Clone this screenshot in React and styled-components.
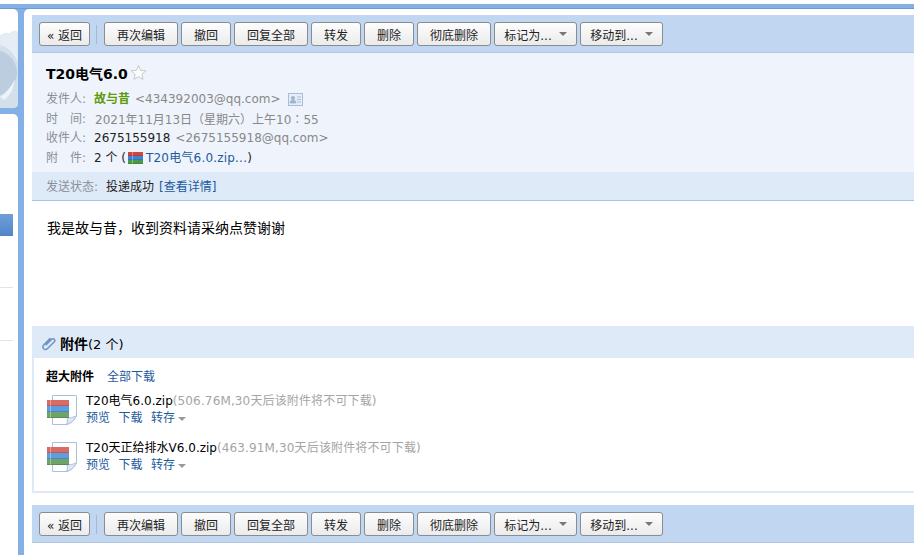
import React from "react";
import styled, { createGlobalStyle } from "styled-components";

const Global = createGlobalStyle`
  html, body { margin: 0; padding: 0; background: #fff; overflow: hidden; }
  body { font-family: "DejaVu Sans", "Noto Sans CJK SC", sans-serif; font-size: 12px; color: #000; }
`;

const Page = styled.div`
  width: 914px;
  height: 555px;
  padding-top: 4px;
  box-sizing: border-box;
  overflow: hidden;
`;

const Frame = styled.div`
  height: 551px;
  box-sizing: border-box;
  background: #85b0e6;
  display: flex;
  flex-direction: column;
`;

const TopEdge = styled.div`
  height: 5px;
  flex: none;
  box-sizing: border-box;
  border-bottom: 1px solid #6f9bd4;
`;

const Columns = styled.div`
  flex: 1;
  min-height: 0;
  display: grid;
  grid-template-columns: 18px 1fr;
  column-gap: 6px;
`;

const Side = styled.div`
  display: flex;
  flex-direction: column;
  gap: 6px;
`;

const SideTop = styled.div`
  height: 99px;
  flex: none;
  overflow: hidden;
  border-radius: 0 5px 5px 0;
  background: #fff;

  svg {
    display: block;
  }
`;

const SideNav = styled.div`
  flex: 1;
  background: #fff;
  border-radius: 0 5px 0 0;
  padding-top: 100px;
`;

const NavSelected = styled.div`
  width: 13px;
  height: 22px;
  background: linear-gradient(#6f9fd8, #4f86c9);
`;

const NavLine = styled.div`
  width: 13px;
  height: 1px;
  background: #dfe4ec;
  margin-top: ${(p) => p.$top}px;
`;

const Main = styled.div`
  background: #fff;
  border-radius: 5px 0 0 0;
  padding: 6px 0 0 8px;
  box-sizing: border-box;
`;

const Toolbar = styled.div`
  height: 38px;
  box-sizing: border-box;
  background: #c0d6f1;
  border-bottom: 1px solid #b4c7df;
  padding: 7px 0 0 7px;
  display: flex;
  align-items: flex-start;
  gap: 3px;
`;

const Btn = styled.button`
  height: 24px;
  width: ${(p) => p.$w}px;
  flex: none;
  box-sizing: border-box;
  padding: 0;
  border: 1px solid #8c8c8c;
  border-radius: 3px;
  background: linear-gradient(#fdfdfd, #ebebeb);
  font: 12px "DejaVu Sans", "Noto Sans CJK SC", sans-serif;
  color: #222;
  display: flex;
  align-items: center;
  justify-content: center;
  gap: 7px;
`;

const Caret = styled.span`
  width: 0;
  height: 0;
  border-left: 4px solid transparent;
  border-right: 4px solid transparent;
  border-top: 4px solid ${(p) => p.$color || "#777"};
  display: inline-block;
`;

const Divider = styled.span`
  width: 1px;
  height: 19px;
  margin: 3px 4px 0 3px;
  background: #a9b8cb;
  flex: none;
`;

const Head = styled.div`
  height: 119px;
  box-sizing: border-box;
  background: #eff4fc;
  padding: 6px 0 0 14px;
`;

const Title = styled.div`
  font-size: 14px;
  font-weight: bold;
  height: 27px;
  margin-bottom: 4px;
  display: flex;
  align-items: center;
  gap: 2px;
`;

const MetaRow = styled.div`
  height: 19.5px;
  line-height: 19.5px;
  display: flex;
  align-items: center;
  color: #888;
  white-space: nowrap;
`;

const Label = styled.span`
  width: 48px;
  flex: none;
  color: #8a8f99;
  white-space: pre;
`;

const StatusLabel = styled.span`
  color: #8a8f99;
  margin-right: 3px;
`;

const Sender = styled.b`
  color: #5e9a0c;
`;

const Dark = styled.span`
  color: #222;
`;

const Grey = styled.span`
  color: #888;
  margin-left: ${(p) => p.$left || 0}px;
`;

const CentredColon = styled.span`
  font-family: "Noto Sans CJK TC", sans-serif;
`;

const Blue = styled.span`
  color: #1c5a9c;
`;

const ShortName = styled(Blue)`
  letter-spacing: 0.2px;
`;

const Status = styled.div`
  height: 29px;
  box-sizing: border-box;
  background: #dfeaf8;
  border-bottom: 1px solid #a9c4e4;
  padding: 0 0 2px 14px;
  display: flex;
  align-items: center;
  gap: 5px;
  color: #222;
`;

const Body = styled.div`
  height: 125px;
  padding: 17px 0 0 15px;
  box-sizing: border-box;
  font-size: 14px;
  line-height: 20px;
`;

const AttachBar = styled.div`
  height: 32px;
  box-sizing: border-box;
  padding: 2px 0 0 9px;
  background: #dfeaf8;
  display: flex;
  align-items: center;
  gap: 3px;
  font-size: 13px;
`;

const AttachTitle = styled.b`
  font-size: 14px;
`;

const AttachCount = styled.span`
  margin-left: -3px;
`;

const AttachBox = styled.div`
  height: 135px;
  box-sizing: border-box;
  border: solid #dfeaf8;
  border-width: 0 0 2px 2px;
  padding: 9px 0 0 12px;
  margin-bottom: 12px;
`;

const AttachHead = styled.div`
  display: flex;
  gap: 13px;
  height: 21px;
  align-items: flex-start;
  line-height: 20px;
`;

const FileRow = styled.div`
  display: flex;
  gap: 6px;
  height: 47px;
  padding-top: 5px;
  box-sizing: border-box;
`;

const FileInfo = styled.div`
  line-height: 17px;
`;

const Size = styled.span`
  color: #a5a5a5;
  letter-spacing: 0.14px;
`;

const Actions = styled.div`
  display: flex;
  align-items: center;
  gap: 8.5px;
  color: #1c5a9c;
`;

const Save = styled.span`
  display: flex;
  align-items: center;
  gap: 3px;
`;

const TinyIcon = styled.svg`
  margin: 0 3px 0 2px;
  flex: none;
`;

const CardIcon = styled.svg`
  margin-left: 7px;
  flex: none;
`;

const ZipIcon = styled.svg`
  margin-top: 1px;
  flex: none;
`;

const SideArt = () => (
  <svg width="18" height="99" viewBox="0 0 18 99">
    <path d="M0 27l6-3 3 1 5-3 4 1v76H0z" fill="#e6edf5" stroke="#d8e2ec" strokeWidth=".6" />
    <path d="M0 36c8 2 14 8 18 18v45H0z" fill="#d3dfeb" />
    <circle cx="-6" cy="64" r="23" fill="#bccddf" />
    <path d="M0 88c6-4 11-10 15-18-1 9-5 17-11 21z" fill="#eef3f8" />
  </svg>
);

const ZipTiny = () => (
  <TinyIcon width="15" height="12" viewBox="0 0 15 12">
    <rect y="0" width="15" height="4" fill="#d0463f" />
    <rect y="4" width="15" height="4" fill="#3f83d6" />
    <rect y="8" width="15" height="4" fill="#4a9a45" />
    <path d="M4.500 0v12" stroke="#fff" strokeOpacity=".35" />
    <path d="M0 3.500h15M0 7.500h15M0 11.500h15" stroke="#000" strokeOpacity=".12" />
  </TinyIcon>
);

const ZipFile = () => (
  <ZipIcon width="34" height="36" viewBox="0 0 34 36">
    <path d="M6.500 1.500h24v20c-2 5-6 8-10 9h-14z" fill="#fff" stroke="#a9c0dc" />
    <path d="M20.500 30.500c1.500-3 1-6 0-7.500 3 1.500 7 .5 10-1.500-2 5-6 8-10 9z" fill="#dfe8f4" stroke="#a9c0dc" />
    <rect x="1" y="6" width="22" height="6" fill="#d96b64" />
    <rect x="1" y="12" width="22" height="6" fill="#5c9ee0" />
    <rect x="1" y="18" width="22" height="6" fill="#6ea468" />
    <path d="M4.500 6v18" stroke="#fff" strokeOpacity=".35" />
    <path d="M1 11.500h22M1 17.500h22M1 23.500h22" stroke="#000" strokeOpacity=".15" />
  </ZipIcon>
);

const Star = () => (
  <svg width="17" height="17" viewBox="0 0 17 17">
    <path d="M8.500 1.500l2.100 4.800 5.200.5-3.900 3.500 1.100 5.100-4.500-2.600-4.500 2.600 1.100-5.100L1.200 6.800l5.200-.5z" fill="#fbfcfe" stroke="#c8c8c8" />
  </svg>
);

const Card = () => (
  <CardIcon width="15" height="13" viewBox="0 0 15 13">
    <rect x=".5" y=".5" width="14" height="12" fill="#e4edf8" stroke="#a9bdd6" />
    <circle cx="5" cy="5" r="2" fill="#9fb4cd" />
    <path d="M2 10c0-2 1.500-3 3-3s3 1 3 3zM9 4h4M9 6.500h4M9 9h4" fill="#9fb4cd" stroke="#9fb4cd" strokeWidth=".8" />
  </CardIcon>
);

const Clip = () => (
  <svg width="16" height="16" viewBox="0 0 16 16" fill="none" stroke="#6f93c2" strokeWidth="1.500" strokeLinecap="round">
    <path d="M5.200 9.800l5.300-5.400c.9-.9 2.100-.9 2.800-.2.8.8.7 1.900-.2 2.800l-6.300 6.300c-1.400 1.400-3.100 1.500-4.200.5-1-1.100-.9-2.800.5-4.200L9 3.600" />
  </svg>
);

const buttons = [
  ["再次编辑", 74],
  ["撤回", 50],
  ["回复全部", 74],
  ["转发", 50],
  ["删除", 50],
  ["彻底删除", 74],
];

const Bar = () => (
  <Toolbar>
    <Btn $w={51}>« 返回</Btn>
    <Divider />
    {buttons.map(([label, w]) => (
      <Btn key={label} $w={w}>{label}</Btn>
    ))}
    <Btn $w={83}>标记为...<Caret /></Btn>
    <Btn $w={83}>移动到...<Caret /></Btn>
  </Toolbar>
);

const files = [
  ["T20电气6.0.zip", "(506.76M,30天后该附件将不可下载)"],
  ["T20天正给排水V6.0.zip", "(463.91M,30天后该附件将不可下载)"],
];

export default function App() {
  return (
    <Page>
      <Global />
      <Frame>
        <TopEdge />
        <Columns>
          <Side>
            <SideTop>
              <SideArt />
            </SideTop>
            <SideNav>
              <NavSelected />
              <NavLine $top={51} />
              <NavLine $top={52} />
            </SideNav>
          </Side>
          <Main>
            <Bar />
            <Head>
              <Title>T20电气6.0<Star /></Title>
              <MetaRow>
                <Label>发件人:</Label>
                <Sender>故与昔</Sender>
                <Grey $left={5}>&lt;434392003@qq.com&gt;</Grey>
                <Card />
              </MetaRow>
              <MetaRow>
                <Label>{"时\u3000间:"}</Label>
                <Grey $left={1}>2021年11月13日（星期六）上午10<CentredColon>：</CentredColon>55</Grey>
              </MetaRow>
              <MetaRow>
                <Label>收件人:</Label>
                <Dark>2675155918</Dark>
                <Grey $left={5}>&lt;2675155918@qq.com&gt;</Grey>
              </MetaRow>
              <MetaRow>
                <Label>{"附\u3000件:"}</Label>
                <Dark>2 个 (</Dark>
                <ZipTiny />
                <ShortName>T20电气6.0.zip...</ShortName>
                <Dark>)</Dark>
              </MetaRow>
            </Head>
            <Status>
              <StatusLabel>发送状态:</StatusLabel>
              <span>投递成功</span>
              <Blue>[查看详情]</Blue>
            </Status>
            <Body>我是故与昔，收到资料请采纳点赞谢谢</Body>
            <AttachBar>
              <Clip />
              <AttachTitle>附件</AttachTitle>
              <AttachCount>(2 个)</AttachCount>
            </AttachBar>
            <AttachBox>
              <AttachHead>
                <b>超大附件</b>
                <Blue>全部下载</Blue>
              </AttachHead>
              {files.map(([name, size]) => (
                <FileRow key={name}>
                  <ZipFile />
                  <FileInfo>
                    <div>{name}<Size>{size}</Size></div>
                    <Actions>
                      <span>预览</span>
                      <span>下载</span>
                      <Save>转存<Caret $color="#999" /></Save>
                    </Actions>
                  </FileInfo>
                </FileRow>
              ))}
            </AttachBox>
            <Bar />
          </Main>
        </Columns>
      </Frame>
    </Page>
  );
}
